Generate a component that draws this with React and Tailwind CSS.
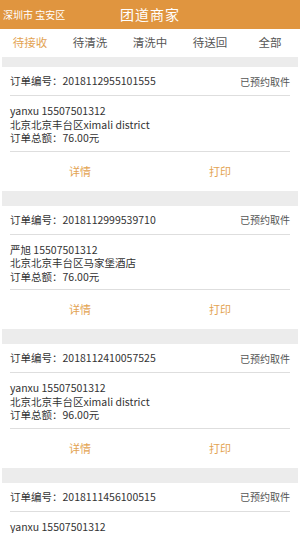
import React from 'react'

const font = { fontFamily: '"Noto Sans CJK SC", "Noto Sans", sans-serif' }

const tabs = ['待接收', '待清洗', '清洗中', '待送回', '全部']

const orders = [
  { no: '2018112955101555', name: 'yanxu 15507501312', addr: '北京北京丰台区ximali district', total: '76.00' },
  { no: '2018112999539710', name: '严旭 15507501312', addr: '北京北京丰台区马家堡酒店', total: '76.00' },
  { no: '2018112410057525', name: 'yanxu 15507501312', addr: '北京北京丰台区ximali district', total: '96.00' },
  { no: '2018111456100515', name: 'yanxu 15507501312', addr: '北京北京丰台区ximali district', total: '76.00' },
]

function OrderCard({ order }) {
  return (
    <div className="bg-white px-[10px]">
      <div className="h-[28px] flex items-center justify-between">
        <span className="text-[10.5px] text-[#333]">订单编号：{order.no}</span>
        <span className="text-[10px] text-[#555]">已预约取件</span>
      </div>
      <div className="h-px bg-[#dedede]" />
      <div className="pt-[8px] pb-[6px] text-[10.5px] leading-[13.5px] text-[#333]">
        <div>{order.name}</div>
        <div>{order.addr}</div>
        <div>订单总额：{order.total}元</div>
      </div>
      <div className="h-px bg-[#dedede]" />
      <div className="h-[39px] flex items-center text-[11px] text-[#e3a352]">
        <div className="flex-1 text-center">详情</div>
        <div className="flex-1 text-center">打印</div>
      </div>
    </div>
  )
}

export default function App() {
  return (
    <div className="w-[300px] h-[533px] overflow-hidden bg-white" style={font}>
      <div className="h-[29px] bg-[#e0953f] flex items-center relative">
        <span className="absolute left-[3px] text-[10px] text-white">深圳市 宝安区</span>
        <span className="flex-1 text-center text-[14px] text-white tracking-[1px]">团道商家</span>
      </div>
      <div className="h-[28px] flex items-center text-[11.5px]">
        {tabs.map((t, i) => (
          <div
            key={t}
            className={i === 0 ? 'flex-1 text-center text-[#e3a352]' : 'flex-1 text-center text-[#555]'}
          >
            {t}
          </div>
        ))}
      </div>
      {orders.map((o, i) => (
        <div key={o.no}>
          <div className={i === 0 ? 'h-[10px] mx-[2px] bg-[#ececec]' : 'h-[15px] mx-[2px] bg-[#ececec]'} />
          <OrderCard order={o} />
        </div>
      ))}
    </div>
  )
}
